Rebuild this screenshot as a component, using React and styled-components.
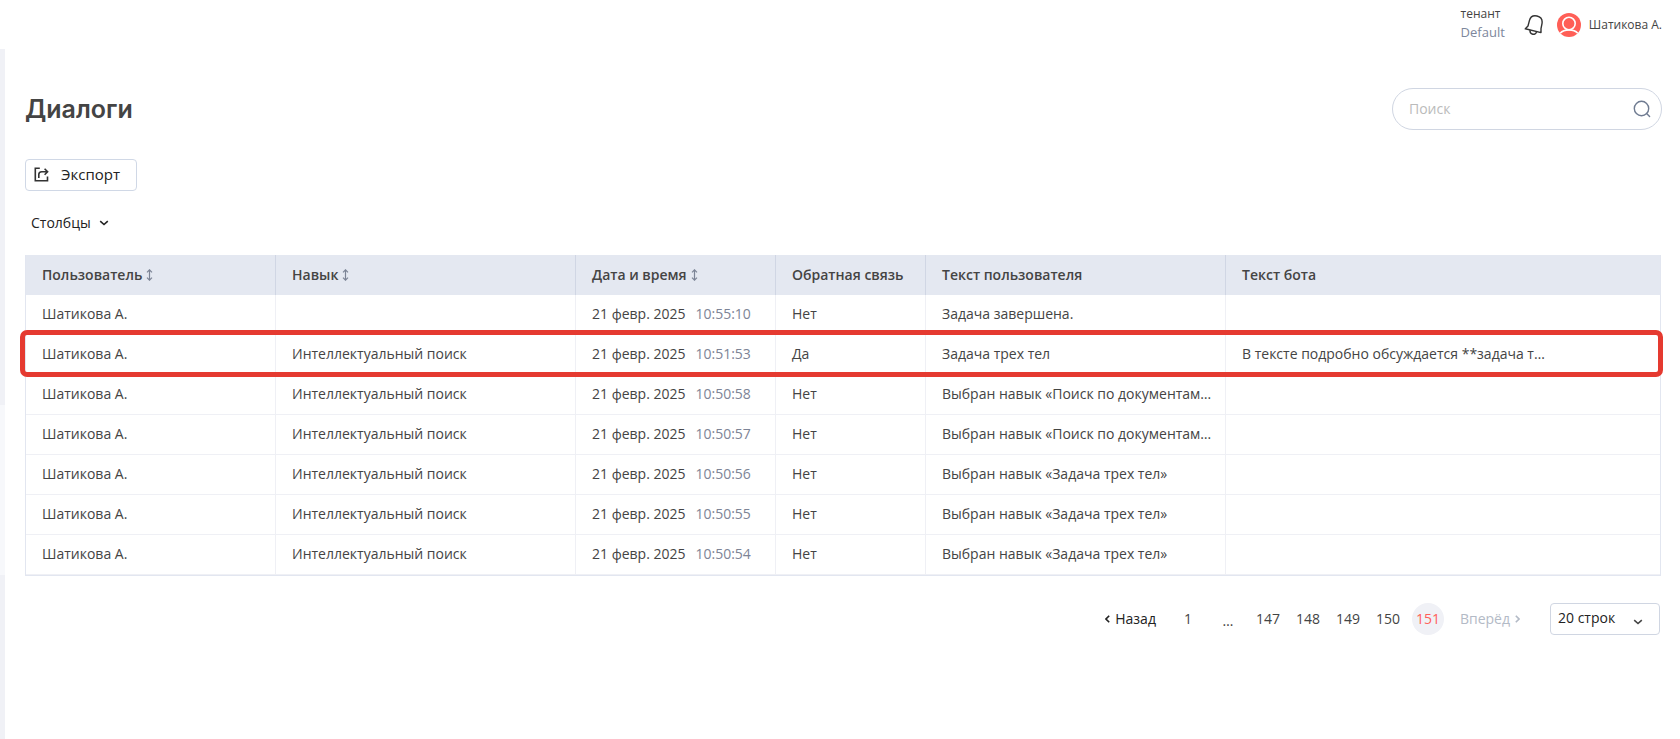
import React from 'react';
import styled, { createGlobalStyle, css } from 'styled-components';

const GlobalStyle = createGlobalStyle`
  *, *::before, *::after { box-sizing: border-box; }
  body {
    margin: 0;
    background: #fff;
    color: #444;
    font: 400 14px/20px "Open Sans", "Noto Sans", sans-serif;
  }
  button, input, select { font: inherit; color: inherit; }
`;

const Page = styled.div`
  display: flex;
  flex-direction: column;
  min-height: 100vh;
`;

const TopBar = styled.header`
  display: flex;
  justify-content: flex-end;
  align-items: center;
  height: 49px;
  padding: 0 18px;
`;

const Tenant = styled.div`
  display: flex;
  flex-direction: column;
  margin-right: 19px;
  padding-bottom: 4px;
  font-size: 12px;
  line-height: 18px;
`;

const TenantName = styled.span`
  font-size: 13px;
  color: #7d879c;
`;

const IconButton = styled.button`
  display: flex;
  padding: 0;
  border: 0;
  background: none;
  cursor: pointer;
`;

const Profile = styled.a`
  display: flex;
  align-items: center;
  gap: 8px;
  margin-left: 13px;
  font-size: 12px;
  color: inherit;
  text-decoration: none;
`;

const Body = styled.div`
  display: flex;
  flex: 1;
`;

const Rail = styled.aside`
  display: flex;
  flex-direction: column;
  width: 5px;
  padding-top: 356px;
  background: #f0f1f6;
`;

const RailThumb = styled.div`
  height: 170px;
  background: #f7f8fb;
`;

const Main = styled.main`
  flex: 1;
  min-width: 0;
  padding: 39px 18px 40px 20px;
`;

const TitleRow = styled.div`
  display: flex;
  align-items: center;
  justify-content: space-between;
`;

const Title = styled.h1`
  margin: 0;
  font: 600 25px/32px Inter, sans-serif;
`;

const SearchBox = styled.label`
  display: flex;
  align-items: center;
  width: 270px;
  height: 42px;
  padding: 0 10px 0 16px;
  border: 1px solid #d0d6e2;
  border-radius: 21px;
`;

const SearchInput = styled.input`
  flex: 1;
  min-width: 0;
  padding: 0;
  border: 0;
  outline: 0;
  background: none;
  &::placeholder { color: #bbb; opacity: 1; }
`;

const ExportButton = styled.button`
  display: flex;
  align-items: center;
  gap: 12px;
  height: 32px;
  margin-top: 29px;
  padding: 0 16px 2px 8px;
  border: 1px solid #d0d8e6;
  border-radius: 4px;
  background: #fff;
  color: #222;
  font-size: 15px;
  cursor: pointer;
`;

const ColumnsButton = styled.button`
  display: flex;
  align-items: center;
  gap: 8px;
  height: 24px;
  margin: 20px 0;
  padding: 0 6px;
  border: 0;
  background: none;
  color: #222;
  cursor: pointer;
`;

const List = styled.section`
  padding-right: 1px;
`;

const Table = styled.table`
  width: 100%;
  table-layout: fixed;
  border: 1px solid #e2e6f0;
  border-top: 0;
  border-spacing: 0;
`;

const cell = css`
  height: 40px;
  padding: 0 16px;
  text-align: left;
  white-space: nowrap;
  &:last-child { border-right: 0; }
`;

const HeadCell = styled.th`
  ${cell}
  width: ${(p) => (p.$width ? `${p.$width}px` : 'auto')};
  border-right: 1px solid #d0d6e4;
  background: #e4e8f1;
  font-weight: 600;
`;

const SortButton = styled.button`
  display: flex;
  align-items: center;
  gap: 4px;
  padding: 0;
  border: 0;
  background: none;
  cursor: pointer;
`;

const Cell = styled.td`
  ${cell}
  padding-bottom: 2px;
  border-right: 1px solid #eff0f5;
  border-bottom: 1px solid #eff0f5;
`;

const Row = styled.tr`
  ${(p) =>
    p.$marked &&
    css`
      position: relative;
      & > td:last-child::after {
        content: "";
        position: absolute;
        inset: -5px -3px -2px -6px;
        border: 5px solid #e53a30;
        border-radius: 7px;
        pointer-events: none;
      }
    `}
`;

const Time = styled.time`
  margin-left: 10px;
  color: #7d8496;
`;

const Footer = styled.div`
  display: flex;
  justify-content: flex-end;
  align-items: center;
  gap: 30px;
  margin-top: 27px;
  padding-right: 1px;
`;

const Pager = styled.nav`
  display: flex;
  align-items: center;
  gap: 8px;
`;

const StepButton = styled.button`
  display: flex;
  align-items: center;
  gap: 5px;
  margin: ${(p) => (p.$next ? '0 0 0 8px' : '0 8px 0 0')};
  padding: 0;
  border: 0;
  background: none;
  color: #222;
  cursor: pointer;
  &:disabled { color: #b3bac6; cursor: default; }
`;

const PageItem = styled.button`
  width: 32px;
  height: 32px;
  padding: 0;
  border: 0;
  border-radius: 50%;
  background: ${(p) => (p.$active ? '#f0f1f6' : 'none')};
  color: ${(p) => (p.$active ? '#ff5f5a' : '#444')};
  cursor: pointer;
`;

const Dots = styled.span`
  width: 32px;
  padding-top: 4px;
  text-align: center;
`;

const SelectBox = styled.div`
  position: relative;
  width: 110px;
  svg {
    position: absolute;
    right: 17px;
    top: 16px;
    pointer-events: none;
  }
`;

const Select = styled.select`
  display: block;
  width: 100%;
  height: 32px;
  padding: 0 7px 2px;
  border: 1px solid #d0d6e2;
  border-radius: 4px;
  background: #fff;
  color: #222;
  appearance: none;
`;

const Bell = () => (
  <svg width="20" height="22" viewBox="0 0 20 22" fill="none" stroke="#333" strokeWidth="1.4" strokeLinejoin="round" strokeLinecap="round">
    <path d="M1.3 14.8 4 12 5.4 6.6C6.4 2.8 9.4 1.200 13 2s5.600 3.800 5 7.600L17 14.600V18.600Z" />
    <path d="M6 16.400c-.2 1.900 1 3.400 2.700 3.800 1.700.4 3.400-.6 3.800-2.400" />
  </svg>
);

const Avatar = () => (
  <svg width="24" height="24" viewBox="0 0 24 24" fill="none">
    <circle cx="12" cy="12" r="12" fill="#ff5f57" />
    <circle cx="12" cy="10.500" r="6.200" stroke="#fff" strokeWidth="1.600" />
    <path d="M3.200 20.200C5.200 18 8.300 16.900 12 16.900s6.800 1.100 8.800 3.300" stroke="#fff" strokeWidth="1.600" />
  </svg>
);

const Magnifier = () => (
  <svg width="18" height="18" viewBox="0 0 18 18" fill="none" stroke="#6f7b91" strokeWidth="1.400" strokeLinecap="round">
    <circle cx="8.500" cy="8.500" r="7.200" />
    <path d="m13.600 13.600 3 3" />
  </svg>
);

const ExportIcon = () => (
  <svg width="15" height="15" viewBox="0 0 15 15" fill="none" stroke="#333" strokeWidth="1.600">
    <path d="M5.800 1.300H1.300v12.400h12.200V9.500M4.800 11V7.500c0-1.900 1-2.800 3-2.800h4.800M10.600 1.700l3 3-3 3" />
  </svg>
);

const SortIcon = () => (
  <svg width="7" height="12" viewBox="0 0 7 12" fill="none" stroke="#7c8496" strokeWidth="1.200">
    <path d="M3.500 1v10M1 3.300 3.500.8 6 3.300M1 8.700l2.500 2.500L6 8.700" />
  </svg>
);

const CHEVRONS = {
  down: { w: 10, h: 6, d: 'm1.200 1.200 3.800 3.300 3.800-3.300' },
  left: { w: 5, h: 8, d: 'M4.200.8 1 4l3.200 3.200' },
  right: { w: 5, h: 8, d: 'M.8.8 4 4 .8 7.200' },
};

const Chevron = ({ dir }) => {
  const { w, h, d } = CHEVRONS[dir];
  return (
    <svg width={w} height={h} viewBox={`0 0 ${w} ${h}`} fill="none" stroke="currentColor" strokeWidth="1.600">
      <path d={d} />
    </svg>
  );
};

const COLUMNS = [
  { title: 'Пользователь', width: 250, sortable: true },
  { title: 'Навык', width: 300, sortable: true },
  { title: 'Дата и время', width: 200, sortable: true },
  { title: 'Обратная связь', width: 150 },
  { title: 'Текст пользователя', width: 300 },
  { title: 'Текст бота' },
];

const SKILL = 'Интеллектуальный поиск';
const ROWS = [
  { time: '10:55:10', skill: '', feedback: 'Нет', text: 'Задача завершена.' },
  { time: '10:51:53', skill: SKILL, feedback: 'Да', text: 'Задача трех тел', bot: 'В тексте подробно обсуждается **задача т…', marked: true },
  { time: '10:50:58', skill: SKILL, feedback: 'Нет', text: 'Выбран навык «Поиск по документам…' },
  { time: '10:50:57', skill: SKILL, feedback: 'Нет', text: 'Выбран навык «Поиск по документам…' },
  { time: '10:50:56', skill: SKILL, feedback: 'Нет', text: 'Выбран навык «Задача трех тел»' },
  { time: '10:50:55', skill: SKILL, feedback: 'Нет', text: 'Выбран навык «Задача трех тел»' },
  { time: '10:50:54', skill: SKILL, feedback: 'Нет', text: 'Выбран навык «Задача трех тел»' },
];

export default function App() {
  return (
    <Page>
      <GlobalStyle />
      <TopBar>
        <Tenant>
          <span>тенант</span>
          <TenantName>Default</TenantName>
        </Tenant>
        <IconButton type="button" aria-label="Уведомления"><Bell /></IconButton>
        <Profile href="#profile"><Avatar />Шатикова А.</Profile>
      </TopBar>
      <Body>
        <Rail><RailThumb /></Rail>
        <Main>
          <TitleRow>
            <Title>Диалоги</Title>
            <SearchBox>
              <SearchInput type="text" placeholder="Поиск" aria-label="Поиск" />
              <Magnifier />
            </SearchBox>
          </TitleRow>
          <ExportButton type="button"><ExportIcon />Экспорт</ExportButton>
          <ColumnsButton type="button">Столбцы<Chevron dir="down" /></ColumnsButton>
          <List>
            <Table>
              <thead>
                <tr>
                  {COLUMNS.map((c) => (
                    <HeadCell key={c.title} $width={c.width} scope="col">
                      {c.sortable ? <SortButton type="button">{c.title}<SortIcon /></SortButton> : c.title}
                    </HeadCell>
                  ))}
                </tr>
              </thead>
              <tbody>
                {ROWS.map((r) => (
                  <Row key={r.time} $marked={r.marked}>
                    <Cell>Шатикова А.</Cell>
                    <Cell>{r.skill}</Cell>
                    <Cell>21 февр. 2025<Time>{r.time}</Time></Cell>
                    <Cell>{r.feedback}</Cell>
                    <Cell>{r.text}</Cell>
                    <Cell>{r.bot}</Cell>
                  </Row>
                ))}
              </tbody>
            </Table>
            <Footer>
              <Pager aria-label="Страницы">
                <StepButton type="button"><Chevron dir="left" />Назад</StepButton>
                <PageItem type="button">1</PageItem>
                <Dots>…</Dots>
                {[147, 148, 149, 150, 151].map((n) => (
                  <PageItem key={n} type="button" $active={n === 151}>{n}</PageItem>
                ))}
                <StepButton type="button" $next disabled>Вперёд<Chevron dir="right" /></StepButton>
              </Pager>
              <SelectBox>
                <Select aria-label="Строк на странице" defaultValue="20">
                  <option value="20">20 строк</option>
                  <option value="50">50 строк</option>
                </Select>
                <Chevron dir="down" />
              </SelectBox>
            </Footer>
          </List>
        </Main>
      </Body>
    </Page>
  );
}
